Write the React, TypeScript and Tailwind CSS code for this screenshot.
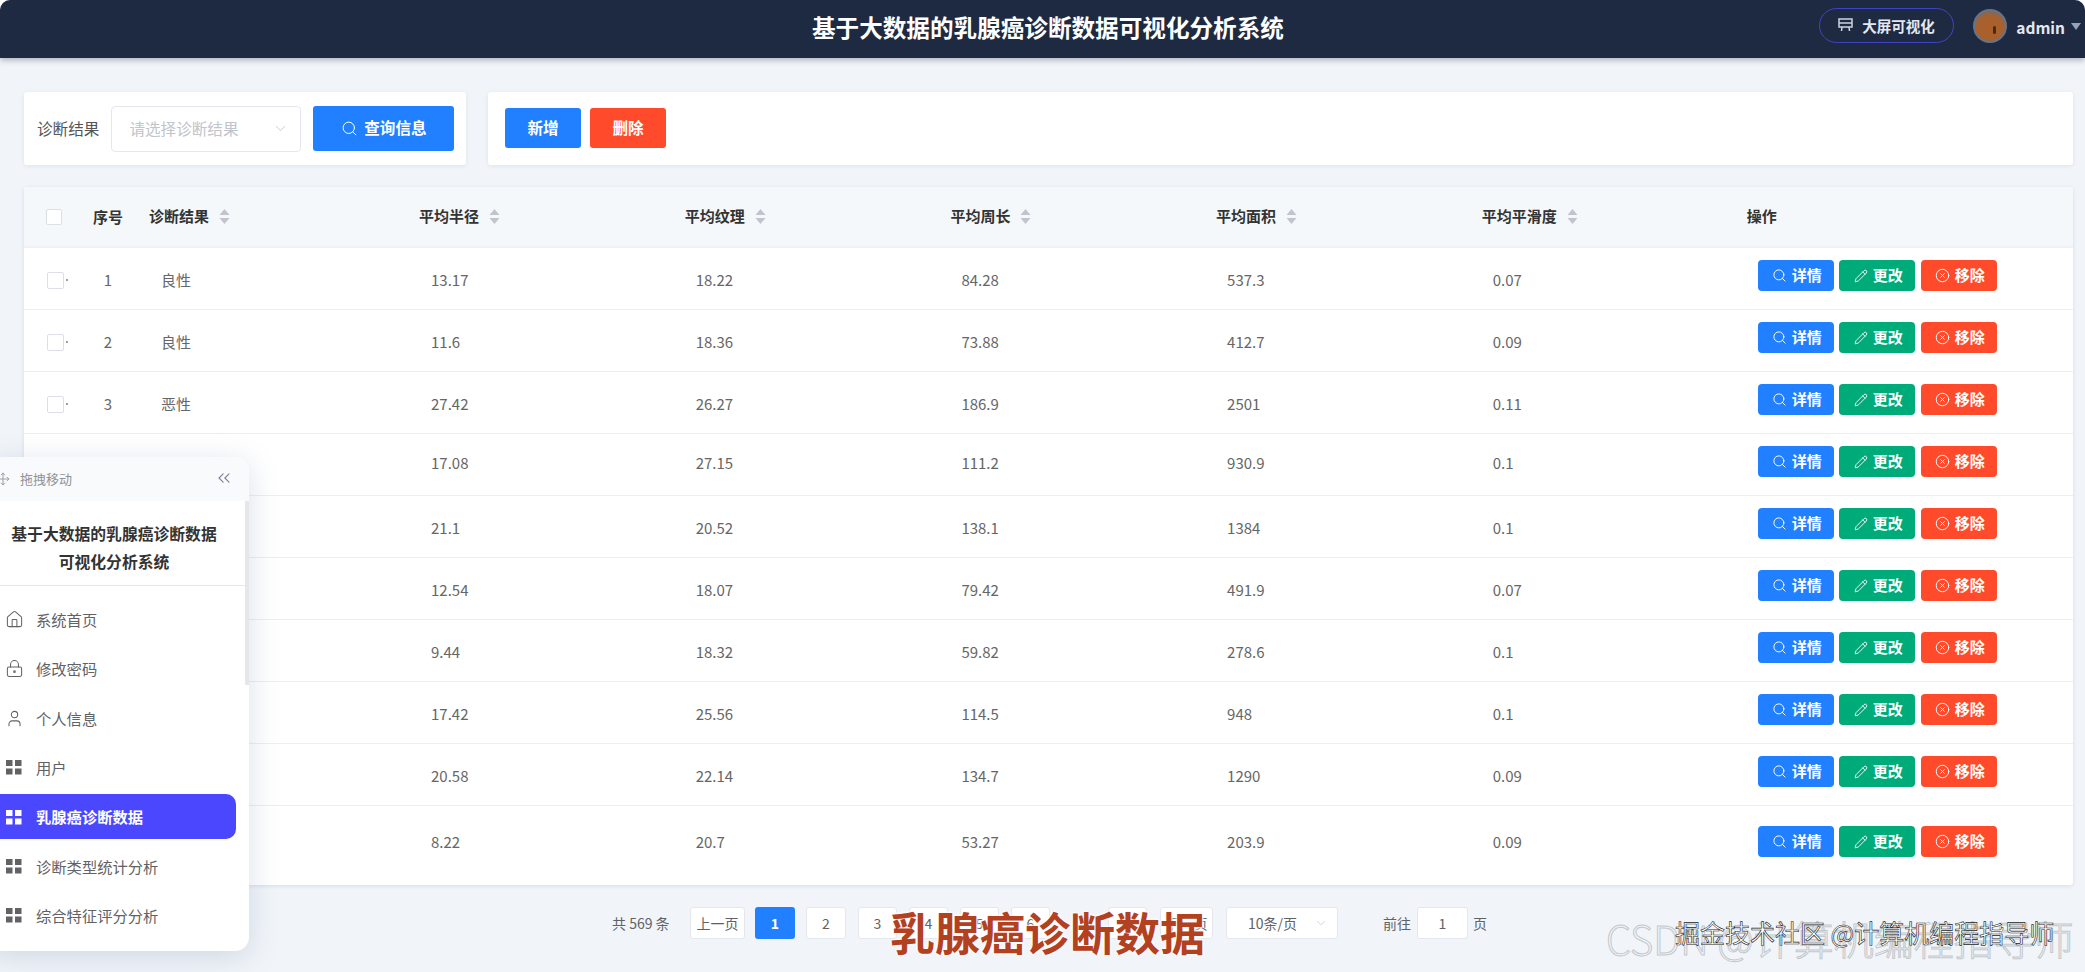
import React from "react";
import { Search, Pencil, CircleX, House, LockKeyhole, User, ChevronsLeft, Move, ChevronDown } from "lucide-react";

const rows = [
  ["1", "良性", "13.17", "18.22", "84.28", "537.3", "0.07"],
  ["2", "良性", "11.6", "18.36", "73.88", "412.7", "0.09"],
  ["3", "恶性", "27.42", "26.27", "186.9", "2501", "0.11"],
  ["4", "恶性", "17.08", "27.15", "111.2", "930.9", "0.1"],
  ["5", "恶性", "21.1", "20.52", "138.1", "1384", "0.1"],
  ["6", "良性", "12.54", "18.07", "79.42", "491.9", "0.07"],
  ["7", "良性", "9.44", "18.32", "59.82", "278.6", "0.1"],
  ["8", "良性", "17.42", "25.56", "114.5", "948", "0.1"],
  ["9", "恶性", "20.58", "22.14", "134.7", "1290", "0.09"],
  ["10", "良性", "8.22", "20.7", "53.27", "203.9", "0.09"],
];

const gridCols = "grid grid-cols-[62px_44px_270px_265.7px_265.7px_265.7px_265.7px_265px_1fr]";

function GridIcon() {
  return (
    <svg width="18" height="18" viewBox="0 0 18 18" fill="currentColor">
      <rect x="1" y="2" width="6.5" height="6" />
      <rect x="10" y="2" width="6.5" height="6" />
      <rect x="1" y="10.5" width="6.5" height="6" />
      <rect x="10" y="10.5" width="6.5" height="6" />
    </svg>
  );
}

function Sort() {
  return (
    <svg width="11" height="17" viewBox="0 0 11 17" fill="#c0c4cc" className="ml-[10px]">
      <path d="M5.5 1 L10.5 7 H0.5 Z" />
      <path d="M5.5 16 L10.5 10 H0.5 Z" />
    </svg>
  );
}

function Head({ label, sort = true }: { label: string; sort?: boolean }) {
  return (
    <div className="flex items-center pl-[19px] font-bold text-[15px] text-[#333]">
      {label}
      {sort && <Sort />}
    </div>
  );
}

function RowButton({ color, icon, label }: { color: string; icon: React.ReactNode; label: string }) {
  return (
    <div className={`flex items-center justify-center gap-[5px] w-[76px] h-[31px] rounded-[4px] text-white text-[15px] font-bold pl-[2px] ${color}`}>
      {icon}
      {label}
    </div>
  );
}

function PageBox({ children, active, w = "w-[39px]" }: { children: React.ReactNode; active?: boolean; w?: string }) {
  return (
    <div
      className={`flex items-center justify-center h-[32px] rounded-[3px] text-[14px] shrink-0 ${w} ${
        active ? "bg-[#2080ff] text-white font-bold" : "bg-white border border-[#e4e7ed] text-[#606266]"
      }`}
    >
      {children}
    </div>
  );
}

const menu: [string, React.ReactNode][] = [
  ["系统首页", <House size={19} strokeWidth={1.3} />],
  ["修改密码", <LockKeyhole size={19} strokeWidth={1.3} />],
  ["个人信息", <User size={19} strokeWidth={1.3} />],
  ["用户", <GridIcon />],
  ["乳腺癌诊断数据", <GridIcon />],
  ["诊断类型统计分析", <GridIcon />],
  ["综合特征评分分析", <GridIcon />],
];

export default function App() {
  return (
    <div className="relative w-[2085px] h-[972px] overflow-hidden bg-white font-['Noto_Sans_CJK_SC','Noto_Sans',sans-serif]">
      <div className="h-full rounded-t-[10px] overflow-hidden bg-[#f1f5f9] flex flex-col">
        {/* header */}
        <header className="relative h-[58px] shrink-0 bg-[#1e2a42] shadow-[0_2px_6px_rgba(30,42,66,0.35)] flex items-center justify-end">
          <div className="absolute left-[812px] top-[10px] text-[23.6px] leading-[34px] font-bold text-white whitespace-nowrap">
            基于大数据的乳腺癌诊断数据可视化分析系统
          </div>
          <div className="flex items-center h-[35px] w-[135px] -mt-[7px] mr-[19px] rounded-full border-[1.5px] border-[#3f44c4] text-[#e2e8f0] text-[14.5px] font-bold pl-[17px] gap-[8px]">
            <svg width="17" height="17" viewBox="0 0 17 17" fill="none" stroke="#cbd5e1" strokeWidth="1.5">
              <path d="M2 2 H15 V10 H2 Z" />
              <path d="M2 6 H15" />
              <path d="M5 10 L4.5 14 M12 10 L12.5 14" />
            </svg>
            大屏可视化
          </div>
          <div className="w-[34px] h-[34px] -mt-[7px] rounded-full border-2 border-[#64748b] bg-[radial-gradient(circle_at_50%_65%,#a9602c_0%,#a9602c_55%,#7b6a5e_85%)] flex items-center justify-center">
            <div className="w-[3px] h-[8px] mt-2 ml-2 bg-[#4a2a10] rounded-full" />
          </div>
          <div className="ml-[9px] -mt-[3px] text-[15.5px] font-bold text-[#e2e8f0]">admin</div>
          <svg width="10" height="7" viewBox="0 0 10 7" fill="#94a3b8" className="ml-[6px] mr-[4px] -mt-[5px]">
            <path d="M0 0 H10 L5 7 Z" />
          </svg>
        </header>

        <main className="pl-[24px] pr-[12px] pt-[34px]">
          {/* top cards */}
          <div className="flex gap-[22px] h-[73px]">
            <div className="w-[442px] bg-white rounded-[3px] shadow-[0_1px_4px_rgba(100,130,170,0.15)] flex items-center pl-[13px]">
              <span className="text-[15.6px] text-[#555]">诊断结果</span>
              <div className="ml-[12px] w-[190px] h-[46px] rounded-[4px] border border-[#e4e7ed] flex items-center pl-[17px] pr-[11px] justify-between text-[15.6px] text-[#c0c4cc]">
                请选择诊断结果
                <ChevronDown size={17} strokeWidth={1.2} />
              </div>
              <div className="ml-[12px] -mt-[1px] w-[141px] h-[45px] rounded-[3px] bg-[#2080ff] text-white font-bold text-[15.6px] flex items-center justify-center gap-[6px]">
                <Search size={17} strokeWidth={1.4} />
                查询信息
              </div>
            </div>
            <div className="flex-1 bg-white rounded-[3px] shadow-[0_1px_4px_rgba(100,130,170,0.15)] flex items-center pl-[17px] gap-[9px]">
              <div className="-mt-[1px] w-[76px] h-[40px] rounded-[3px] bg-[#2080ff] text-white font-bold text-[15.6px] flex items-center justify-center">新增</div>
              <div className="-mt-[1px] w-[76px] h-[40px] rounded-[3px] bg-[#ff4a2b] text-white font-bold text-[15.6px] flex items-center justify-center">删除</div>
            </div>
          </div>

          {/* table */}
          <div className="mt-[22px] bg-white rounded-[3px] shadow-[0_1px_4px_rgba(100,130,170,0.2)]">
            <div className={`${gridCols} h-[61px] bg-[#f5f8fb] border-b-2 border-[#eef2f7]`}>
              <div className="flex items-center pl-[22px]">
                <div className="w-[16px] h-[16px] rounded-[2px] border border-[#dcdfe6] bg-white" />
              </div>
              <div className="flex items-center justify-center font-bold text-[15px] text-[#333] pt-[2px]">序号</div>
              <Head label="诊断结果" />
              <Head label="平均半径" />
              <Head label="平均纹理" />
              <Head label="平均周长" />
              <Head label="平均面积" />
              <Head label="平均平滑度" />
              <Head label="操作" sort={false} />
            </div>
            {rows.map((r, i) => (
              <div
                key={r[0]}
                className={`${gridCols} text-[15px] text-[#666] ${i === 9 ? "h-[79px]" : "h-[62px] border-b border-[#ebeef5]"}`}
              >
                <div className="flex items-center pl-[23px] pt-[3px] gap-[2px]">
                  <div className="w-[17px] h-[17px] rounded-[2px] border border-[#dcdfe6] bg-white" />
                  <div className="w-[2px] h-[2px] bg-[#9aa0a8] -mt-[1px]" />
                </div>
                <div className="flex items-center justify-center pt-[3px]">{r[0]}</div>
                <div className="flex items-center pl-[31px] pt-[3px]">{r[1]}</div>
                {r.slice(2).map((v, j) => (
                  <div
                    key={j}
                    className={`flex items-center ${j === 0 ? "pl-[31px]" : "pl-[30px]"} ${i === 9 ? "pb-[6px]" : i === 3 ? "pb-[2px]" : "pt-[3px]"}`}
                  >
                    {v}
                  </div>
                ))}
                <div className={`flex items-center pl-[30px] gap-[5.5px] ${i === 9 ? "pb-[8px]" : "pb-[6px]"}`}>
                  <RowButton color="bg-[#2080ff]" icon={<Search size={15} strokeWidth={1.5} />} label="详情" />
                  <RowButton color="bg-[#00ab7a]" icon={<Pencil size={14} strokeWidth={1.5} />} label="更改" />
                  <RowButton color="bg-[#ff4a2b]" icon={<CircleX size={15} strokeWidth={1.5} />} label="移除" />
                </div>
              </div>
            ))}
          </div>

          {/* pagination */}
          <div className="mt-[22px] flex items-center pl-[588px] text-[14px] text-[#606266] h-[32px]">
            <span className="w-[78px] shrink-0">共 569 条</span>
            <PageBox w="w-[55px]">上一页</PageBox>
            <div className="w-[10px] shrink-0" />
            <PageBox active w="w-[40px]">1</PageBox>
            <div className="w-[11px] shrink-0" />
            <div className="flex gap-[12px]">
              <PageBox w="w-[40px]">2</PageBox>
              <PageBox>3</PageBox>
              <PageBox>4</PageBox>
              <PageBox>5</PageBox>
              <PageBox>6</PageBox>
            </div>
            <div className="w-[58px] shrink-0" />
            <PageBox>57</PageBox>
            <div className="w-[13px] shrink-0" />
            <PageBox w="w-[53px]">下一页</PageBox>
            <div className="w-[13px] shrink-0" />
            <div className="w-[112px] h-[32px] shrink-0 bg-white border border-[#e4e7ed] rounded-[3px] flex items-center pl-[21px] pr-[9px] justify-between">
              10条/页
              <ChevronDown size={14} strokeWidth={1.2} className="text-[#c0c4cc]" />
            </div>
            <span className="ml-[45px] shrink-0 w-[34px]">前往</span>
            <div className="w-[51px] h-[32px] shrink-0 bg-white border border-[#e4e7ed] rounded-[3px] flex items-center justify-center">1</div>
            <span className="ml-[5px]">页</span>
          </div>
        </main>
      </div>

      {/* floating side menu */}
      <aside className="absolute left-[-12px] top-[457px] w-[261px] h-[494px] bg-white rounded-[14px] shadow-[0_6px_30px_rgba(90,110,150,0.22)] overflow-hidden">
        <div className="h-[44px] bg-[#f8fafc] flex items-center pl-[8px] text-[13px] text-[#909399]">
          <Move size={14} strokeWidth={1.5} />
          <span className="ml-[10px]">拖拽移动</span>
          <ChevronsLeft size={20} strokeWidth={1.3} className="ml-auto mr-[15px] -mt-[3px] text-[#7b8494]" />
        </div>
        <div className="absolute right-0 top-[44px] w-[4px] h-[184px] bg-[#e5e7eb]" />
        <div className="h-[85px] pt-[10px] mr-[4px] pr-[5px] border-b border-[#e5e7eb] flex flex-col items-center justify-center text-[15.8px] leading-[28px] font-bold text-[#333]">
          <div>基于大数据的乳腺癌诊断数据</div>
          <div>可视化分析系统</div>
        </div>
        <nav className="pt-[11px]">
          {menu.map(([label, icon], i) => (
            <div
              key={label}
              className={`flex items-center h-[45px] mb-[4.3px] mr-[13px] pl-[17px] rounded-r-[10px] text-[15.3px] ${
                i === 4 ? "bg-[#4b47ff] text-white font-bold" : "text-[#606266]"
              }`}
            >
              <span className="w-[31px] flex shrink-0">{icon}</span>
              {label}
            </div>
          ))}
        </nav>
      </aside>

      {/* overlays: captions and watermarks */}
      <div className="absolute left-[890px] top-[901px] text-[45px] leading-[62px] font-bold text-[#b3401f] whitespace-nowrap [text-shadow:0_0_3px_#fff,0_0_3px_#fff,0_0_3px_#fff]">
        乳腺癌诊断数据
      </div>
      <div className="absolute left-[1606px] top-[910px] text-[40px] leading-[56px] whitespace-nowrap font-light text-transparent [-webkit-text-stroke:1px_#c4c8cc]">
        CSDN @计算机编程指导师
      </div>
      <div className="absolute left-[1675px] top-[914px] text-[25px] leading-[36px] whitespace-nowrap text-white [-webkit-text-stroke:0.6px_#222]">
        掘金技术社区 @计算机编程指导师
      </div>
    </div>
  );
}
